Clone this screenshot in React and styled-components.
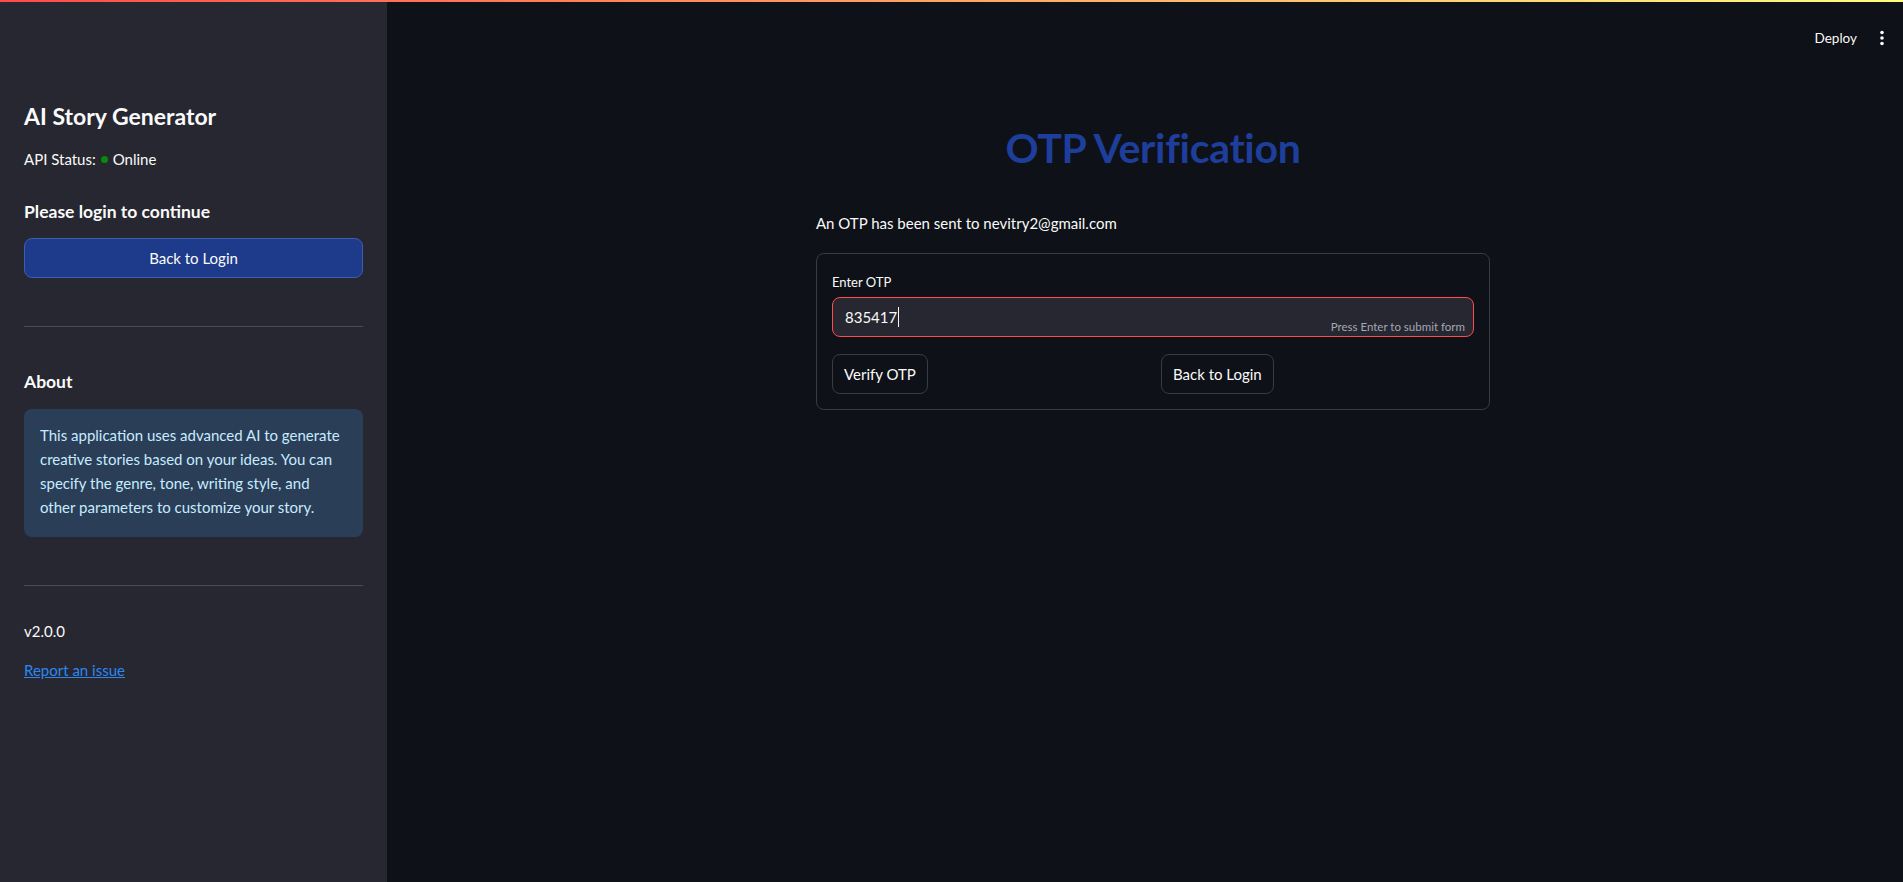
import React from "react";
import styled, { createGlobalStyle } from "styled-components";

const GlobalStyle = createGlobalStyle`
  html, body {
    margin: 0;
    padding: 0;
    background: #0e1117;
    font-family: "Lato", "Noto Sans", sans-serif;
    color: #fafafa;
  }
  * { box-sizing: border-box; }
`;

const Page = styled.div`
  position: relative;
  display: flex;
  width: 100%;
  height: 882px;
  overflow: hidden;
`;

const Decoration = styled.div`
  position: absolute;
  top: 0;
  left: 0;
  right: 0;
  height: 2px;
  background: linear-gradient(90deg, #ff4b4b, #fffd80);
  z-index: 5;
`;

const Sidebar = styled.aside`
  width: 387px;
  flex-shrink: 0;
  background: #262730;
  padding: 99px 24px 0 24px;
  display: flex;
  flex-direction: column;
`;

const SideTitle = styled.h3`
  margin: 0;
  font-size: 23px;
  font-weight: 700;
  line-height: 34px;
  color: #fafafa;
`;

const StatusLine = styled.p`
  margin: 14px 0 0;
  font-size: 15px;
  line-height: 24px;
  display: flex;
  align-items: center;
`;

const Dot = styled.span`
  display: inline-block;
  width: 7px;
  height: 7px;
  border-radius: 50%;
  background: ${(p) => p.color};
  margin: 0 5px 0 5px;
`;

const SideHeading = styled.h4`
  margin: ${(p) => p.$top || 0}px 0 0;
  font-size: 17.5px;
  font-weight: 700;
  line-height: 28px;
`;

const SideButton = styled.button`
  margin-top: 12px;
  width: 100%;
  height: 40px;
  border-radius: 8px;
  border: 1px solid #3e5cb0;
  background: #1e3a8a;
  color: #fafafa;
  font-family: inherit;
  font-size: 15px;
`;

const Divider = styled.hr`
  border: none;
  border-top: 1px solid #4a4b55;
  margin: ${(p) => p.$top}px 0 0;
  width: 100%;
`;

const InfoBox = styled.div`
  margin-top: 13px;
  background: #2a3e57;
  color: #c7ebff;
  border-radius: 8px;
  padding: 14px 16px 18px;
  font-size: 15px;
  line-height: 24px;
`;

const Plain = styled.p`
  margin: ${(p) => p.$top}px 0 0;
  font-size: 15px;
  line-height: 24px;
`;

const Link = styled.a`
  margin-top: 15px;
  font-size: 15px;
  line-height: 24px;
  color: #2d87f0;
  text-decoration: underline;
  align-self: flex-start;
`;

const Main = styled.main`
  position: relative;
  flex: 1;
  display: flex;
  justify-content: center;
  padding: 0 0 0 16px;
`;

const Toolbar = styled.div`
  position: absolute;
  top: 30px;
  right: 18px;
  display: flex;
  align-items: center;
  gap: 22px;
`;

const DeployText = styled.span`
  font-size: 13.5px;
  color: #fafafa;
`;

const Content = styled.div`
  width: 674px;
  padding-top: 122px;
`;

const Title = styled.h1`
  margin: 0;
  text-align: center;
  font-size: 41px;
  font-weight: 700;
  line-height: 52px;
  color: #1e3e9c;
  letter-spacing: -0.3px;
`;

const Sent = styled.p`
  margin: 37px 0 0;
  font-size: 15px;
  line-height: 24px;
`;

const Form = styled.form`
  margin-top: 18px;
  border: 1px solid #3a3b43;
  border-radius: 8px;
  padding: 15px 15px 15px;
`;

const Label = styled.label`
  display: block;
  font-size: 13px;
  line-height: 20px;
  margin-top: 3px;
`;

const InputBox = styled.div`
  position: relative;
  margin-top: 5px;
  height: 40px;
  border: 1px solid #ff4b4b;
  border-radius: 8px;
  background: #262730;
  display: flex;
  align-items: center;
  padding: 0 12px;
`;

const InputValue = styled.span`
  font-size: 15px;
  color: #fafafa;
  border-right: 1px solid #fafafa;
  padding-right: 1px;
  line-height: 20px;
`;

const Hint = styled.span`
  position: absolute;
  right: 8px;
  bottom: 3px;
  font-size: 11.5px;
  color: #a3a8b4;
`;

const Columns = styled.div`
  margin-top: 17px;
  display: grid;
  grid-template-columns: 1fr 1fr;
  gap: 16px;
`;

const FormButton = styled.button`
  justify-self: start;
  height: 40px;
  padding: 0 11px;
  border-radius: 8px;
  border: 1px solid #3a3c45;
  background: #0e1117;
  color: #fafafa;
  font-family: inherit;
  font-size: 15px;
`;

const MoreIcon = () => (
  <svg width="6" height="16" viewBox="0 0 6 16">
    <circle cx="3" cy="2.5" r="1.8" fill="#fafafa" />
    <circle cx="3" cy="8" r="1.8" fill="#fafafa" />
    <circle cx="3" cy="13.5" r="1.8" fill="#fafafa" />
  </svg>
);

export default function App() {
  return (
    <>
      <GlobalStyle />
      <Page>
        <Decoration />
        <Sidebar>
          <SideTitle>AI Story Generator</SideTitle>
          <StatusLine>
            API Status:<Dot color="#0a8a0a" />Online
          </StatusLine>
          <SideHeading $top={27}>Please login to continue</SideHeading>
          <SideButton>Back to Login</SideButton>
          <Divider $top={48} />
          <SideHeading $top={41}>About</SideHeading>
          <InfoBox>
            This application uses advanced AI to generate creative stories
            based on your ideas. You can specify the genre, tone, writing
            style, and other parameters to customize your story.
          </InfoBox>
          <Divider $top={48} />
          <Plain $top={33}>v2.0.0</Plain>
          <Link href="#">Report an issue</Link>
        </Sidebar>
        <Main>
          <Toolbar>
            <DeployText>Deploy</DeployText>
            <MoreIcon />
          </Toolbar>
          <Content>
            <Title>OTP Verification</Title>
            <Sent>An OTP has been sent to nevitry2@gmail.com</Sent>
            <Form onSubmit={(e) => e.preventDefault()}>
              <Label>Enter OTP</Label>
              <InputBox>
                <InputValue>835417</InputValue>
                <Hint>Press Enter to submit form</Hint>
              </InputBox>
              <Columns>
                <FormButton type="button">Verify OTP</FormButton>
                <FormButton type="button">Back to Login</FormButton>
              </Columns>
            </Form>
          </Content>
        </Main>
      </Page>
    </>
  );
}
